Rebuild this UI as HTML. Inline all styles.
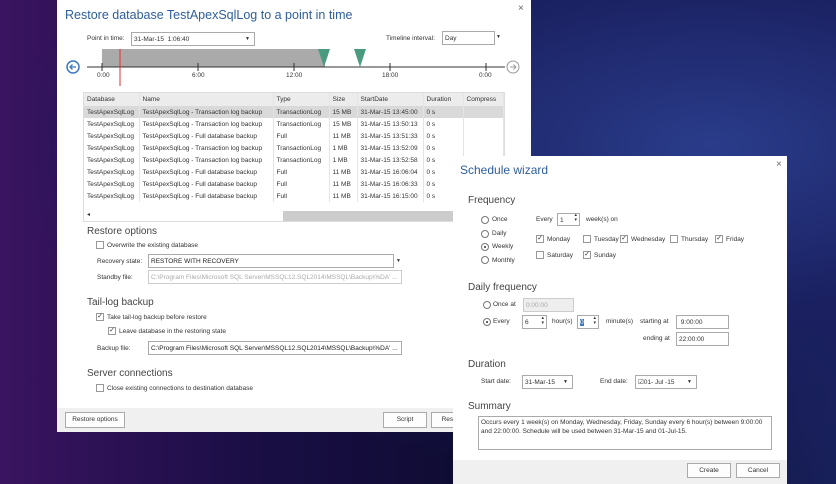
<!DOCTYPE html>
<html><head><meta charset="utf-8"><style>
*{margin:0;padding:0;box-sizing:border-box}
body{width:836px;height:484px;overflow:hidden;position:relative;font-family:"Liberation Sans",sans-serif;font-size:6.5px;color:#333;
background:radial-gradient(ellipse at 85% 30%,#2a3c8a 0%,#1a2060 35%,transparent 70%),linear-gradient(90deg,#3a1460 0%,#1a0e45 30%,#0c0c30 60%,#18205a 100%);}
.a{position:absolute;white-space:nowrap}
.dlg{position:absolute;background:#fff}
.box{position:absolute;border:1px solid #aaa;background:#fff;font-size:6.5px;padding:1px 2px;line-height:11px;white-space:nowrap;overflow:hidden}
.cb{position:absolute;width:8px;height:8px;border:1px solid #999;background:#fff;font-size:7px;line-height:6px;text-align:center;color:#333}
.rd{position:absolute;width:8px;height:8px;border:1px solid #777;border-radius:50%;background:#fff}
.rd.on::after{content:"";position:absolute;left:2px;top:2px;width:2px;height:2px;border-radius:50%;background:#333}
.h{position:absolute;font-size:10px;color:#444;white-space:nowrap}
.btn{position:absolute;border:1px solid #aaa;background:#fdfdfd;font-size:6.5px;text-align:center;line-height:14px}
table{border-collapse:collapse;font-size:6.5px;table-layout:fixed}
td{height:12px;padding:0 3px;border-right:1px solid #e4e4e4;white-space:nowrap;overflow:hidden;color:#333}
</style></head><body>

<div class="dlg" style="left:57px;top:0;width:474px;height:432px">
 <div class="a" style="left:8px;top:8px;font-size:12.5px;color:#2e5e9e">Restore database TestApexSqlLog to a point in time</div>
 <div class="a" style="left:461px;top:3px;font-size:10px;color:#666">×</div>
 <div class="a" style="left:30px;top:35px">Point in time:</div>
 <div class="box" style="left:74px;top:32px;width:124px;height:14px">31-Mar-15 &nbsp;1:06:40<span style="position:absolute;right:4px;font-size:5px">▼</span></div>
 <div class="a" style="left:329px;top:35px">Timeline interval:</div>
 <div class="box" style="left:385px;top:31px;width:53px;height:14px">Day</div>
 <div class="a" style="left:439px;top:34px;font-size:5px">▼</div>
 <div class="a" style="left:45px;top:49px;width:223px;height:18px;background:#aaa"></div>
 <svg class="a" style="left:0;top:44px" width="474" height="48">
  <polygon points="261,5 273,5 267,23" fill="#4a9a80"/>
  <polygon points="297,5 309,5 303,23" fill="#4a9a80"/>
  <line x1="30" y1="23" x2="448" y2="23" stroke="#333" stroke-width="1"/>
  <g stroke="#333"><line x1="45" y1="19" x2="45" y2="27"/><line x1="141" y1="19" x2="141" y2="27"/><line x1="237" y1="19" x2="237" y2="27"/><line x1="333" y1="19" x2="333" y2="27"/><line x1="429" y1="19" x2="429" y2="27"/></g>
  <line x1="63" y1="5" x2="63" y2="42" stroke="#d33" stroke-width="1"/>
  <circle cx="16" cy="23" r="6" fill="#fff" stroke="#3a78c4" stroke-width="1.5"/><path d="M19 23H13M15.5 20.5L13 23L15.5 25.5" stroke="#3a78c4" fill="none" stroke-width="1.3"/>
  <circle cx="456" cy="23" r="6" fill="#fff" stroke="#999" stroke-width="1"/><path d="M453 23H459M456.5 20.5L459 23L456.5 25.5" stroke="#999" fill="none"/>
 </svg>
 <div class="a" style="left:40px;top:72px">0:00</div><div class="a" style="left:135px;top:72px">6:00</div><div class="a" style="left:229px;top:72px">12:00</div><div class="a" style="left:325px;top:72px">18:00</div><div class="a" style="left:422px;top:72px">0:00</div>
 <div class="a" style="left:26px;top:92px;width:422px;height:130px;border:1px solid #ddd;overflow:hidden">
  <table style="width:420px">
   <colgroup><col style="width:55px"><col style="width:134px"><col style="width:56px"><col style="width:28px"><col style="width:66px"><col style="width:40px"><col></colgroup>
   <tr style="background:#ececec;height:13px"><td>Database</td><td>Name</td><td>Type</td><td>Size</td><td>StartDate</td><td>Duration</td><td>Compress</td></tr>
   <tr style="background:#d9d9d9"><td>TestApexSqlLog</td><td>TestApexSqlLog - Transaction log backup</td><td>TransactionLog</td><td>15 MB</td><td>31-Mar-15 13:45:00</td><td>0 s</td><td></td></tr>
   <tr><td>TestApexSqlLog</td><td>TestApexSqlLog - Transaction log backup</td><td>TransactionLog</td><td>15 MB</td><td>31-Mar-15 13:50:13</td><td>0 s</td><td></td></tr>
   <tr><td>TestApexSqlLog</td><td>TestApexSqlLog - Full database backup</td><td>Full</td><td>11 MB</td><td>31-Mar-15 13:51:33</td><td>0 s</td><td></td></tr>
   <tr><td>TestApexSqlLog</td><td>TestApexSqlLog - Transaction log backup</td><td>TransactionLog</td><td>1 MB</td><td>31-Mar-15 13:52:09</td><td>0 s</td><td></td></tr>
   <tr><td>TestApexSqlLog</td><td>TestApexSqlLog - Transaction log backup</td><td>TransactionLog</td><td>1 MB</td><td>31-Mar-15 13:52:58</td><td>0 s</td><td></td></tr>
   <tr><td>TestApexSqlLog</td><td>TestApexSqlLog - Full database backup</td><td>Full</td><td>11 MB</td><td>31-Mar-15 16:06:04</td><td>0 s</td><td></td></tr>
   <tr><td>TestApexSqlLog</td><td>TestApexSqlLog - Full database backup</td><td>Full</td><td>11 MB</td><td>31-Mar-15 16:06:33</td><td>0 s</td><td></td></tr>
   <tr><td>TestApexSqlLog</td><td>TestApexSqlLog - Full database backup</td><td>Full</td><td>11 MB</td><td>31-Mar-15 16:15:00</td><td>0 s</td><td></td></tr>
  </table>
  <div class="a" style="left:199px;top:118px;width:223px;height:10px;background:#ccc"></div>
  <div class="a" style="left:3px;top:118px;font-size:6px">◂</div>
 </div>
 <div class="h" style="left:30px;top:226px">Restore options</div>
 <div class="cb" style="left:39px;top:241px"></div><div class="a" style="left:50px;top:242px">Overwrite the existing database</div>
 <div class="a" style="left:40px;top:258px">Recovery state:</div>
 <div class="box" style="left:91px;top:254px;width:246px;height:14px;color:#222">RESTORE WITH RECOVERY</div>
 <div class="a" style="left:339px;top:258px;font-size:5px">▼</div>
 <div class="a" style="left:40px;top:274px">Standby file:</div>
 <div class="box" style="left:91px;top:270px;width:254px;height:14px;color:#aaa;border-color:#ccc">C:\Program Files\Microsoft SQL Server\MSSQL12.SQL2014\MSSQL\Backup\%DA' ...</div>
 <div class="h" style="left:30px;top:297px">Tail-log backup</div>
 <div class="cb" style="left:39px;top:313px">✓</div><div class="a" style="left:50px;top:314px">Take tail-log backup before restore</div>
 <div class="cb" style="left:51px;top:327px">✓</div><div class="a" style="left:62px;top:328px">Leave database in the restoring state</div>
 <div class="a" style="left:40px;top:345px">Backup file:</div>
 <div class="box" style="left:91px;top:341px;width:254px;height:14px;color:#222">C:\Program Files\Microsoft SQL Server\MSSQL12.SQL2014\MSSQL\Backup\%DA' ...</div>
 <div class="h" style="left:30px;top:368px">Server connections</div>
 <div class="cb" style="left:39px;top:384px"></div><div class="a" style="left:50px;top:385px">Close existing connections to destination database</div>
 <div class="a" style="left:0;top:408px;width:474px;height:24px;background:#f0f0f0"></div>
 <div class="btn" style="left:8px;top:412px;width:60px;height:16px">Restore options</div>
 <div class="btn" style="left:326px;top:412px;width:44px;height:16px">Script</div>
 <div class="btn" style="left:374px;top:412px;width:44px;height:16px">Restore</div>
</div>

<div class="dlg" style="left:453px;top:156px;width:334px;height:328px">
 <div class="a" style="left:7px;top:7px;font-size:12px;color:#2e5e9e">Schedule wizard</div>
 <div class="a" style="left:323px;top:3px;font-size:10px;color:#666">×</div>
 <div class="h" style="left:15px;top:39px">Frequency</div>
 <div class="rd" style="left:28px;top:60px"></div><div class="a" style="left:39px;top:60px">Once</div>
 <div class="rd" style="left:28px;top:74px"></div><div class="a" style="left:39px;top:74px">Daily</div>
 <div class="rd on" style="left:28px;top:87px"></div><div class="a" style="left:39px;top:87px">Weekly</div>
 <div class="rd" style="left:28px;top:100px"></div><div class="a" style="left:39px;top:101px">Monthly</div>
 <div class="a" style="left:83px;top:60px">Every</div>
 <div class="box" style="left:104px;top:57px;width:23px;height:13px">1<span style="position:absolute;right:2px;top:-1px;font-size:5px;line-height:5px">▴<br>▾</span></div>
 <div class="a" style="left:133px;top:60px">week(s) on</div>
 <div class="cb" style="left:83px;top:79px">✓</div><div class="a" style="left:94px;top:80px">Monday</div>
 <div class="cb" style="left:130px;top:79px"></div><div class="a" style="left:141px;top:80px">Tuesday</div>
 <div class="cb" style="left:167px;top:79px">✓</div><div class="a" style="left:178px;top:80px">Wednesday</div>
 <div class="cb" style="left:217px;top:79px"></div><div class="a" style="left:228px;top:80px">Thursday</div>
 <div class="cb" style="left:262px;top:79px">✓</div><div class="a" style="left:273px;top:80px">Friday</div>
 <div class="cb" style="left:83px;top:95px"></div><div class="a" style="left:94px;top:96px">Saturday</div>
 <div class="cb" style="left:130px;top:95px">✓</div><div class="a" style="left:141px;top:96px">Sunday</div>
 <div class="h" style="left:15px;top:126px">Daily frequency</div>
 <div class="rd" style="left:30px;top:145px"></div><div class="a" style="left:40px;top:145px">Once at</div>
 <div class="box" style="left:70px;top:142px;width:51px;height:14px;background:#eee;color:#aaa;border-color:#ccc">0:00:00</div>
 <div class="rd on" style="left:30px;top:162px"></div><div class="a" style="left:40px;top:162px">Every</div>
 <div class="box" style="left:69px;top:159px;width:25px;height:14px">6<span style="position:absolute;right:2px;top:0;font-size:5px;line-height:5px">▴<br>▾</span></div>
 <div class="a" style="left:99px;top:162px">hour(s)</div>
 <div class="box" style="left:124px;top:159px;width:22px;height:14px"><span style="background:#3a78c4;color:#fff">0</span><span style="position:absolute;right:2px;top:0;font-size:5px;line-height:5px">▴<br>▾</span></div>
 <div class="a" style="left:153px;top:162px">minute(s)</div>
 <div class="a" style="left:187px;top:162px">starting at</div>
 <div class="box" style="left:223px;top:159px;width:53px;height:14px">&nbsp;9:00:00</div>
 <div class="a" style="left:190px;top:179px">ending at</div>
 <div class="box" style="left:223px;top:176px;width:53px;height:14px">22:00:00</div>
 <div class="h" style="left:15px;top:203px">Duration</div>
 <div class="a" style="left:28px;top:222px">Start date:</div>
 <div class="box" style="left:69px;top:219px;width:51px;height:14px">31-Mar-15<span style="position:absolute;right:4px;font-size:5px">▼</span></div>
 <div class="a" style="left:147px;top:222px">End date:</div>
 <div class="box" style="left:182px;top:219px;width:62px;height:14px">☑01- Jul -15<span style="position:absolute;right:4px;font-size:5px">▼</span></div>
 <div class="h" style="left:15px;top:245px">Summary</div>
 <div class="box" style="left:25px;top:260px;width:294px;height:34px;line-height:9px;white-space:normal;font-size:6.5px">Occurs every 1 week(s) on Monday, Wednesday, Friday, Sunday every 6 hour(s) between 9:00:00 and 22:00:00. Schedule will be used between 31-Mar-15 and 01-Jul-15.</div>
 <div class="a" style="left:0;top:304px;width:334px;height:24px;background:#f0f0f0"></div>
 <div class="btn" style="left:234px;top:307px;width:44px;height:15px">Create</div>
 <div class="btn" style="left:283px;top:307px;width:44px;height:15px">Cancel</div>
</div>
</body></html>
